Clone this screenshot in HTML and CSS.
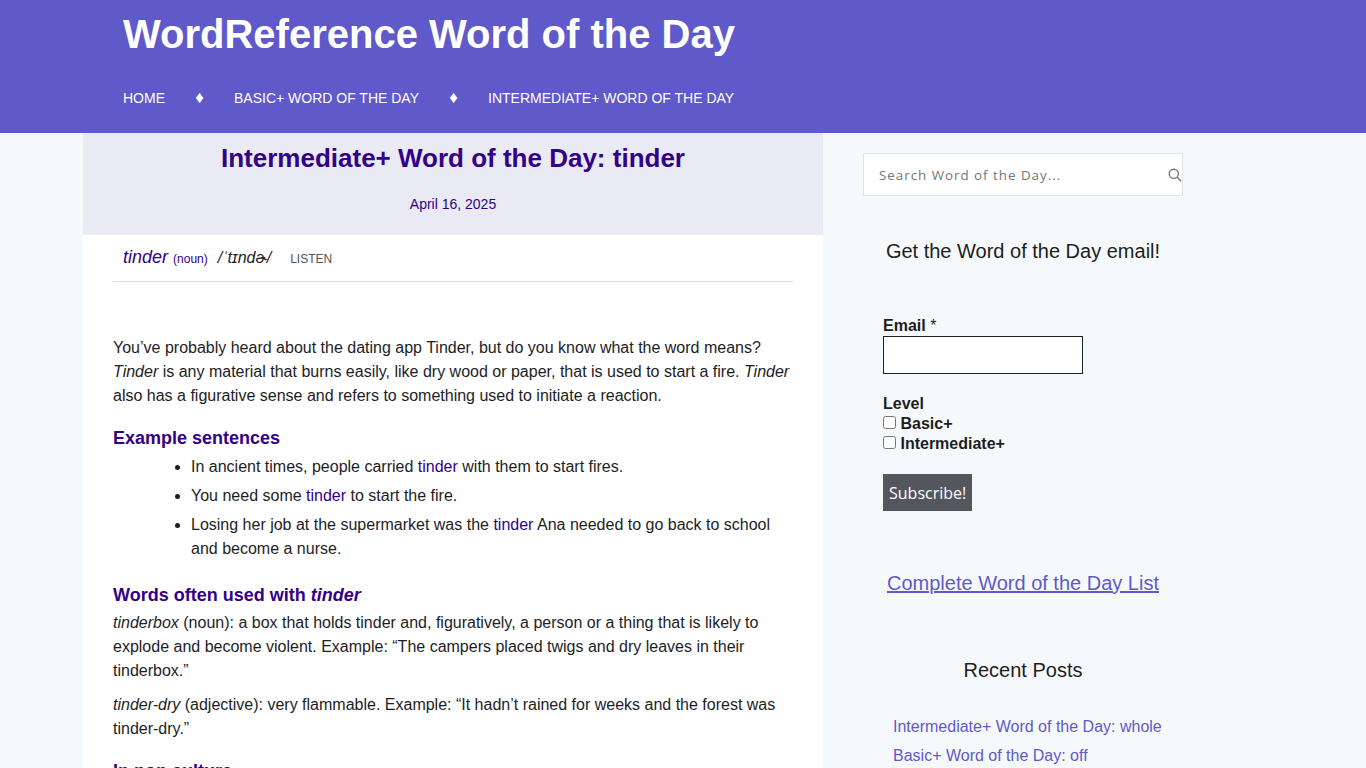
FILE: index.html
```html
<!DOCTYPE html>
<html lang="en">
<head>
  <meta charset="UTF-8">
  <meta name="viewport" content="width=device-width, initial-scale=1.0">
  <title>Intermediate+ Word of the Day: tinder</title>
  <link rel="stylesheet" href="styles.css">
</head>
<body>
  <header class="site-header">
    <div class="wrap">
      <div class="site-title">WordReference Word of the Day</div>
      <nav class="site-nav">
        <a href="#">HOME</a>
        <span class="nav-sep">♦</span>
        <a href="#">BASIC+ WORD OF THE DAY</a>
        <span class="nav-sep">♦</span>
        <a href="#">INTERMEDIATE+ WORD OF THE DAY</a>
      </nav>
    </div>
  </header>

  <div class="wrap layout">
    <main class="post">
      <div class="post-head">
        <h1>Intermediate+ Word of the Day: tinder</h1>
        <p class="post-date">April 16, 2025</p>
      </div>
      <div class="post-body">
        <div class="word-line">
          <em class="word">tinder</em> <span class="pos">(noun)</span>
          <span class="ipa">/ˈtɪndɚ/</span>
          <span class="listen">LISTEN</span>
        </div>

        <p class="intro">You’ve probably heard about the dating app Tinder, but do you know what the word means? <em>Tinder</em> is any material that burns easily, like dry wood or paper, that is used to start a fire. <em>Tinder</em> also has a figurative sense and refers to something used to initiate a reaction.</p>

        <h2>Example sentences</h2>
        <ul class="examples">
          <li>In ancient times, people carried <span class="hl">tinder</span> with them to start fires.</li>
          <li>You need some <span class="hl">tinder</span> to start the fire.</li>
          <li>Losing her job at the supermarket was the <span class="hl">tinder</span> Ana needed to go back to school and become a nurse.</li>
        </ul>

        <h2 class="h-words">Words often used with <em>tinder</em></h2>
        <p class="entry"><em>tinderbox</em> (noun): a box that holds tinder and, figuratively, a person or a thing that is likely to explode and become violent. Example: “The campers placed twigs and dry leaves in their tinderbox.”</p>
        <p class="entry"><em>tinder-dry</em> (adjective): very flammable. Example: “It hadn’t rained for weeks and the forest was tinder-dry.”</p>

        <h2 class="h-pop">In pop culture</h2>
      </div>
    </main>

    <aside class="sidebar">
      <form class="search">
        <input class="search-input" type="text" placeholder="Search Word of the Day...">
        <svg class="search-icon" width="14" height="14" viewBox="0 0 14 14" fill="none" stroke="#777" stroke-width="1.4">
          <circle cx="5.8" cy="5.8" r="4.6"/>
          <path d="M9.2 9.2 13.2 13.2"/>
        </svg>
      </form>

      <h3 class="email-title">Get the Word of the Day email!</h3>

      <form class="signup">
        <label class="field-label" for="email">Email <span class="req">*</span></label>
        <input class="email-input" id="email" type="text">
        <div class="field-label level">Level</div>
        <label class="check"><input type="checkbox"> Basic+</label>
        <label class="check"><input type="checkbox"> Intermediate+</label>
        <button class="subscribe" type="button">Subscribe!</button>
      </form>

      <a class="full-list" href="#">Complete Word of the Day List</a>

      <h3 class="recent-title">Recent Posts</h3>
      <ul class="recent">
        <li><a href="#">Intermediate+ Word of the Day: whole</a></li>
        <li><a href="#">Basic+ Word of the Day: off</a></li>
      </ul>
    </aside>
  </div>
</body>
</html>
```

FILE: styles.css
```css
body {
  margin: 0;
  background-color: #f6f9fb;
  color: #1d1d1f;
  font-family: "Liberation Sans", Arial, sans-serif;
  font-size: 16px;
  line-height: 24px;
}

.wrap {
  width: 1200px;
  margin: 0 auto;
}

.site-header {
  background-color: #5f59c9;
  height: 133px;
  color: white;
}

.site-title {
  padding: 10px 40px 0;
  font-size: 40px;
  line-height: 48px;
  font-weight: bold;
}

.site-nav {
  display: flex;
  padding: 28px 40px 0;
  font-size: 14px;
  line-height: 24px;
}

.site-nav a {
  color: white;
  text-decoration: none;
}

.nav-sep {
  width: 69px;
  text-align: center;
  font-size: 17px;
}

.layout {
  display: flex;
  align-items: flex-start;
}

.post {
  width: 740px;
  background: white;
}

.post-head {
  background-color: #e9eaf4;
  height: 102px;
  text-align: center;
  color: #330088;
  overflow: hidden;
}

.post-head h1 {
  margin: 10px 0 0;
  font-size: 26px;
  line-height: 30px;
}

.post-date {
  margin: 19px 0 0;
  font-size: 14px;
  line-height: 25px;
}

.post-body {
  padding: 0 30px;
}

.word-line {
  display: flex;
  align-items: baseline;
  height: 46px;
  padding-left: 10px;
  border-bottom: 1px solid #ddd;
  line-height: 44px;
  white-space: pre;
}

.word {
  color: #330088;
  font-size: 18px;
}

.pos {
  margin-left: 5px;
  color: #330088;
  font-size: 12px;
}

.ipa {
  margin-left: 10px;
  font-size: 16px;
  font-style: italic;
}

.listen {
  margin-left: 19px;
  color: #555;
  font-size: 12px;
}

.intro {
  margin: 54px 0 0;
}

.post-body h2 {
  margin: 18px 0 0;
  color: #330088;
  font-size: 18px;
  line-height: 24px;
}

.examples {
  margin: 5px 0 0;
  padding-left: 78px;
}

.examples li {
  margin-bottom: 5px;
}

.hl {
  color: #330088;
}

.post-body .h-words {
  margin-top: 22px;
}

.entry {
  margin: 4px 0 10px;
}

.post-body .h-pop {
  margin-top: 18px;
}

.sidebar {
  width: 320px;
  margin-left: 40px;
}

.search {
  position: relative;
  margin-top: 20px;
}

.search-input {
  display: block;
  box-sizing: border-box;
  width: 320px;
  height: 43px;
  padding: 0 15px;
  border: 1px solid #e2e2e2;
  background: white;
  font-family: "Open Sans", sans-serif;
  font-size: 13.33px;
  letter-spacing: 1px;
}

.search-input::placeholder {
  color: #757575;
}

.search-icon {
  position: absolute;
  top: 15px;
  right: 1px;
}

.email-title {
  margin: 41px 0 0;
  text-align: center;
  font-size: 20px;
  font-weight: normal;
  line-height: 28px;
}

.signup {
  margin: 51px 0 0 20px;
  font-weight: bold;
}

.field-label {
  display: block;
  line-height: 20px;
}

.req {
  font-weight: normal;
}

.email-input {
  display: block;
  box-sizing: border-box;
  width: 200px;
  height: 38px;
  margin-top: 0;
  border: 1px solid #222;
  background: white;
}

.level {
  margin-top: 20px;
}

.check {
  display: block;
  line-height: 20px;
}

.check input {
  margin: 0;
  vertical-align: 0;
}

.subscribe {
  display: block;
  height: 37px;
  margin-top: 20px;
  padding: 0 6px;
  border: none;
  background-color: #54565e;
  color: white;
  font-family: "Open Sans", sans-serif;
  font-size: 16px;
}

.full-list {
  display: block;
  margin-top: 58px;
  color: #5f59c9;
  text-align: center;
  font-size: 20px;
  line-height: 28px;
}

.recent-title {
  margin: 59px 0 0;
  text-align: center;
  font-size: 20px;
  font-weight: normal;
  line-height: 28px;
}

.recent {
  margin: 31px 0 0;
  padding: 0 0 0 30px;
  list-style: none;
}

.recent li {
  margin-bottom: 5px;
}

.recent a {
  color: #5f59c9;
  text-decoration: none;
}
```
